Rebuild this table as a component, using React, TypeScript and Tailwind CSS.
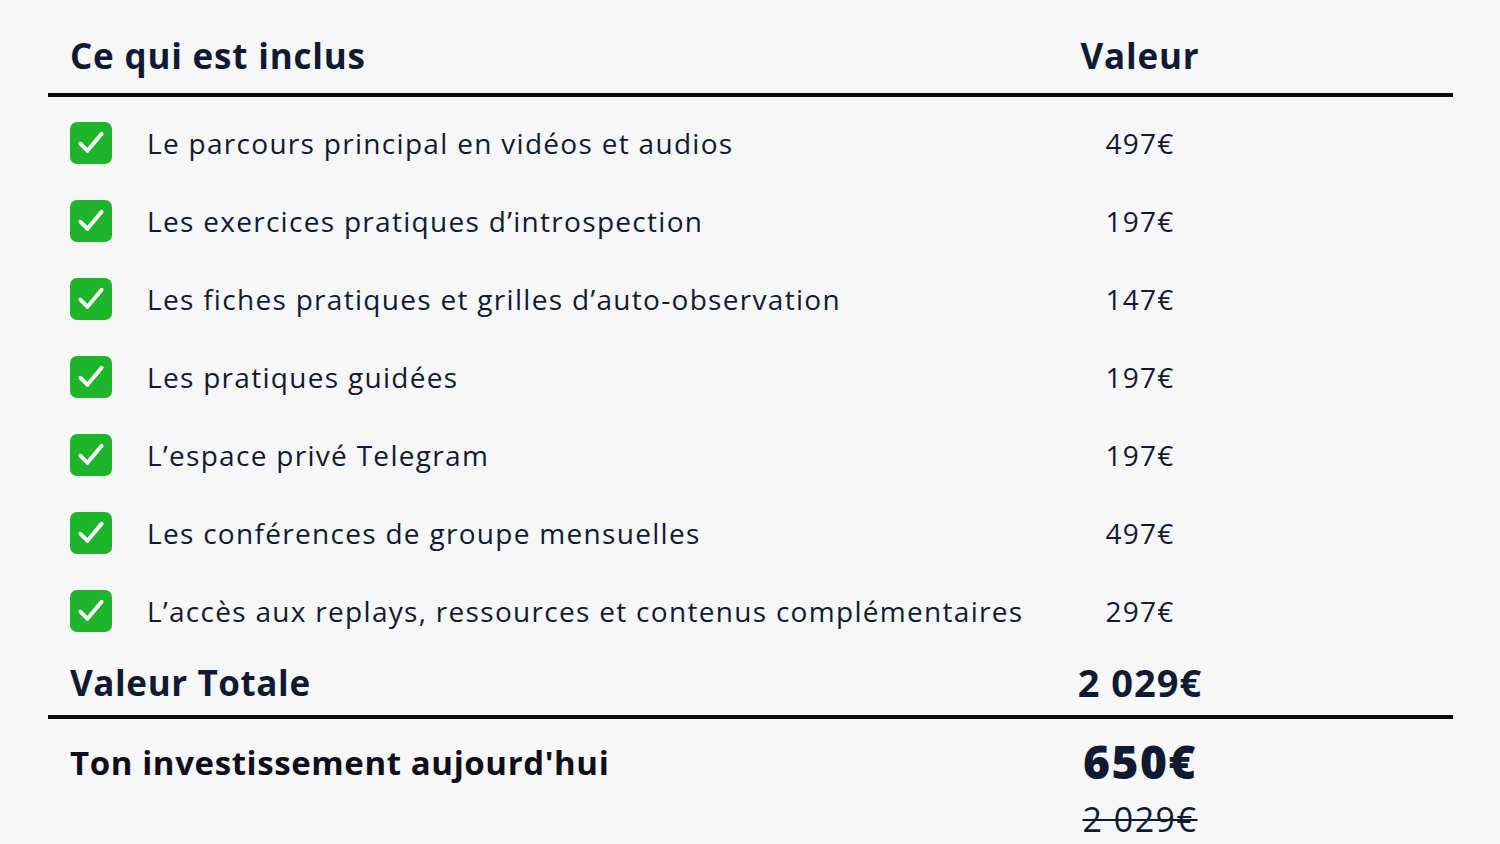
const items = [
  { label: 'Le parcours principal en vidéos et audios', value: '497€' },
  { label: 'Les exercices pratiques d’introspection', value: '197€' },
  { label: 'Les fiches pratiques et grilles d’auto-observation', value: '147€' },
  { label: 'Les pratiques guidées', value: '197€' },
  { label: 'L’espace privé Telegram', value: '197€' },
  { label: 'Les conférences de groupe mensuelles', value: '497€' },
  { label: 'L’accès aux replays, ressources et contenus complémentaires', value: '297€' },
];

function CheckBox() {
  return (
    <span className="flex h-[42px] w-[42px] shrink-0 items-center justify-center rounded-[7px] bg-[#1fb52a]">
      <svg width="34" height="34" viewBox="0 0 24 24" fill="none" stroke="white" strokeWidth="2.7" strokeLinecap="round" strokeLinejoin="round">
        <polyline points="4.5 12.5 9.5 17.5 19.5 5.5" />
      </svg>
    </span>
  );
}

export default function App() {
  return (
    <div
      className="min-h-[844px] w-full bg-[#f8f7f7] text-[#101a33]"
      style={{ fontFamily: '"Open Sans", "Noto Sans", sans-serif' }}
    >
      <div className="ml-[48px] w-[1405px]">
        {/* header */}
        <div className="grid grid-cols-[1000px_184px] border-b-4 border-[#0b0b0b] pt-[34px] pb-[16px]">
          <h2 className="pl-[22px] text-[35px] font-bold leading-[43px] tracking-[0.8px]">Ce qui est inclus</h2>
          <span className="text-center text-[35px] font-bold leading-[43px] tracking-[0.8px]">Valeur</span>
        </div>

        {/* items */}
        <ul className="pt-[7px]">
          {items.map((it) => (
            <li key={it.label} className="grid h-[78px] grid-cols-[1000px_184px] items-center">
              <div className="flex items-center gap-[35px] pl-[22px]">
                <CheckBox />
                <span className="text-[28px] leading-[34px] tracking-[1.3px]">{it.label}</span>
              </div>
              <span className="text-center text-[28px] leading-[34px] tracking-[1.3px]">{it.value}</span>
            </li>
          ))}
        </ul>

        {/* total */}
        <div className="grid h-[69px] grid-cols-[1000px_184px] items-center border-b-4 border-[#0b0b0b]">
          <span className="pl-[22px] text-[35px] font-bold leading-[43px] tracking-[0.6px]">Valeur Totale</span>
          <span className="text-center text-[38px] font-bold leading-[43px] tracking-[1px]">2 029€</span>
        </div>

        {/* investment */}
        <div className="grid grid-cols-[1000px_184px] items-start">
          <span className="pl-[22px] pt-[23px] text-[33px] font-bold leading-[41px] tracking-[0.6px] text-[#0d0f1a]">
            Ton investissement aujourd'hui
          </span>
          <div className="flex flex-col items-center pt-[14px]">
            <span className="text-[46px] font-extrabold leading-[56px] tracking-[1.5px]">650€</span>
            <span className="mt-[10px] text-[34px] leading-[40px] tracking-[1.5px] line-through decoration-2">2 029€</span>
          </div>
        </div>
      </div>
    </div>
  );
}
